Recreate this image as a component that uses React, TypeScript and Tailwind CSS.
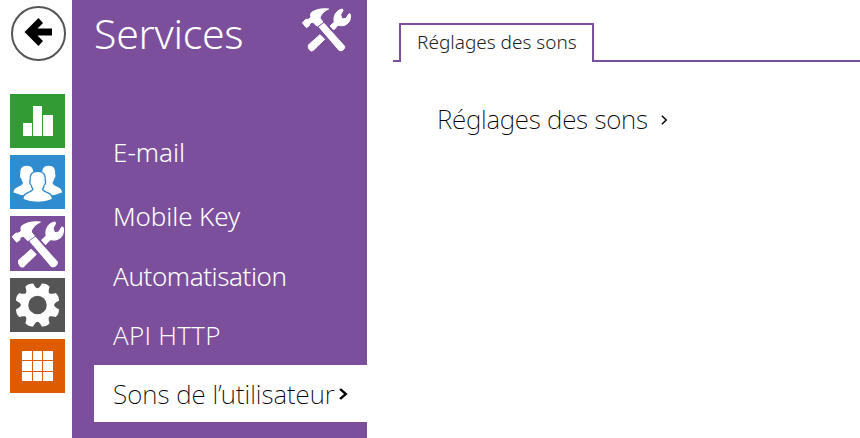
import type { ReactNode } from "react";

function Tools({ className }: { className: string }) {
  return (
    <svg className={className} viewBox="0 0 147 132" preserveAspectRatio="none" fill="#fff" stroke="#fff" strokeWidth="3" strokeLinejoin="round">
      <path d="M80 3C62 1 44 3 29 13C24 18 25 23 27 27C24 33 17 35 12 34L1 44L13 59L22 53C22 45 28 43 33 43L45 55L63 42L55 32C53 24 64 10 80 3Z" />
      <path d="M51 57L66 46L128 115Q129 121 124 125Q117 131 111 127Z" />
      <path d="M19 111L54 80L68 94L34 127Q28 132 23 126Q17 120 19 111Z" />
      <path d="M84 54L97 42C92 25 103 6 121 3L123 7L116 20L120 33L132 31L141 17L145 19C148 35 140 50 123 53C116 54 111 52 108 52L95 66Z" />
    </svg>
  );
}

function Tile({ color, children }: { color: string; children: ReactNode }) {
  return <div className={`flex w-[55px] items-center justify-center ${color}`}>{children}</div>;
}

function Chevron({ className, width }: { className: string; width: number }) {
  return (
    <svg className={className} viewBox="0 0 8 12" preserveAspectRatio="none" fill="none" stroke="#000" strokeWidth={width}>
      <path d="M1 1L6 6L1 11" />
    </svg>
  );
}

function Person() {
  return (
    <path d="M0 -14C-6 -14 -8 -10 -7.500 -4C-8.500 -3 -7.500 1 -6.500 1C-6 4 -5 5 -4.500 6C-4.500 9 -8 10 -11 11.500C-14 13 -15.500 15 -15.500 18Q0 25 15.500 18C15.500 15 14 13 11 11.500C8 10 4.500 9 4.500 6C5 5 6 4 6.500 1C7.500 1 8.500 -3 7.500 -4C8 -10 6 -14 0 -14Z" />
  );
}

const teeth = [22.5, 67.5, 112.5, 157.5, 202.5, 247.5, 292.5, 337.5];
const cells = [0, 1, 2, 3, 4, 5, 6, 7, 8];

export default function App() {
  return (
    <div className="flex h-[438px] w-[860px] overflow-hidden bg-white font-['Noto_Sans','Open_Sans',sans-serif] font-light">
      <nav className="w-[72px] shrink-0 pl-[10px] pt-[6px]">
        <div className="ml-[1px] flex size-[55px] items-center justify-center rounded-full border-2 border-[#555] pb-[4px]">
          <svg className="h-[28px] w-[29px]" viewBox="0 0 29 28" fill="#000">
            <path d="M0.500 14L14.500 0L19 5L13.500 10.5H28V17.5H13.5L19 23L14.500 28Z" />
          </svg>
        </div>
        <div className="mt-[33px] grid h-[299px] grid-rows-[54px_54px_55px_54px_54px] gap-[7px]">
          <Tile color="bg-[#339b33]">
            <div className="flex h-[30px] items-end gap-[1px] pl-[1px]">
              <i className="h-[13px] w-[9px] bg-white" />
              <i className="h-[30px] w-[9px] bg-white" />
              <i className="h-[21px] w-[10px] bg-white" />
            </div>
          </Tile>
          <Tile color="bg-[#2e8ccf]">
            <svg className="h-[54px] w-[55px]" viewBox="0 0 55 54" fill="#fff">
              <g transform="translate(16.8 22.5) scale(.86 .84)"><Person /></g>
              <g transform="translate(38.7 22.5) scale(.86 .84)"><Person /></g>
              <g transform="translate(27.7 28.8) scale(.91 .84)" stroke="#2e8ccf" strokeWidth="3.2" paintOrder="stroke"><Person /></g>
            </svg>
          </Tile>
          <Tile color="bg-[#7c4f9c]"><Tools className="mt-[1px] h-[47px] w-[52px]" /></Tile>
          <Tile color="bg-[#555]">
            <svg className="h-[54px] w-[55px]" viewBox="-27.5 -27 55 54" fill="#fff">
              {teeth.map((a) => (
                <path key={a} transform={`rotate(${a})`} d="M-6.500 -14.500C-4.500 -17 -4.500 -19 -4.200 -21.500Q0 -23.500 4.200 -21.500C4.500 -19 4.500 -17 6.500 -14.500Z" />
              ))}
              <circle r="13" fill="none" stroke="#fff" strokeWidth="7.500" />
            </svg>
          </Tile>
          <Tile color="bg-[#df5b00]">
            <div className="grid grid-cols-3 gap-[1px]">
              {cells.map((c) => <i key={c} className="h-[9.5px] w-[9.5px] bg-white" />)}
            </div>
          </Tile>
        </div>
      </nav>

      <aside className="w-[295px] shrink-0 bg-[#7c4f9c] pl-[22px] text-white">
        <header className="flex h-[124px] items-start justify-between pr-[16px]">
          <h1 className="mt-[3px] whitespace-nowrap text-[41px] leading-[60px] tracking-[-0.25px]">Services</h1>
          <Tools className="mt-[8px] h-[44px] w-[49px]" />
        </header>
        <ul className="whitespace-nowrap text-[26px] leading-[56px]">
          <li className="h-[64px] pl-[19px]">E-mail</li>
          <li className="h-[60px] pl-[19px] tracking-[-0.1px]">Mobile Key</li>
          <li className="h-[59px] pl-[19px] tracking-[-0.42px]">Automatisation</li>
          <li className="h-[58px] pl-[19px] font-['Open_Sans'] tracking-[0.3px]">API HTTP</li>
          <li className="flex h-[57px] items-center bg-white pl-[19px] font-extralight text-black">
            <span className="w-[226px]">Sons de l’utilisateur</span>
            <Chevron className="h-[12px] w-[9px]" width={2.3} />
          </li>
        </ul>
      </aside>

      <main className="grow pl-[26px] pt-[23px]">
        <div className="flex h-[39px]">
          <div className="w-[6px] border-b-2 border-[#7c4f9c]" />
          <div className="w-[195px] whitespace-nowrap border-x-2 border-t-2 border-[#7c4f9c] pl-[16px] text-[19px] leading-[34px] text-[#222]">Réglages des sons</div>
          <div className="grow border-b-2 border-[#7c4f9c]" />
        </div>
        <div className="mt-[29px] flex items-center pl-[44px] text-[26px] font-extralight leading-[56px] text-black">
          <span className="w-[224px] whitespace-nowrap tracking-[-0.24px]">Réglages des sons</span>
          <Chevron className="mt-[2px] h-[10px] w-[7px]" width={1.7} />
        </div>
      </main>
    </div>
  );
}
